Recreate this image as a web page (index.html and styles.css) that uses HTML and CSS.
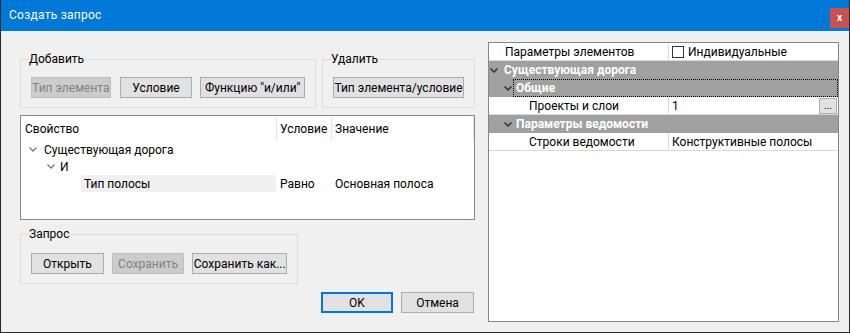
FILE: index.html
```html
<!DOCTYPE html>
<html lang="ru">
<head>
<meta charset="utf-8">
<title>Создать запрос</title>
<link rel="stylesheet" href="styles.css">
</head>
<body>
<div class="window">
  <div class="titlebar">
    <span class="title">Создать запрос</span>
    <div class="close">x</div>
  </div>
  <div class="content">
    <div class="left">
      <div class="top-groups">
        <fieldset class="group g-add">
          <legend>Добавить</legend>
          <div class="btns">
            <button class="btn disabled w-type">Тип элемента</button>
            <button class="btn w-cond">Условие</button>
            <button class="btn w-func">Функцию "и/или"</button>
          </div>
        </fieldset>
        <fieldset class="group g-del">
          <legend>Удалить</legend>
          <div class="btns">
            <button class="btn w-del">Тип элемента/условие</button>
          </div>
        </fieldset>
      </div>

      <div class="tree">
        <div class="trow thead">
          <div class="cell c1">Свойство</div>
          <div class="cell c2">Условие</div>
          <div class="cell c3">Значение</div>
        </div>
        <div class="trow">
          <div class="cell c1 lvl1">
            <svg class="tchev" width="8" height="5" viewBox="0 0 8 5"><polyline points="0.5,0.5 4,4 7.5,0.5" fill="none" stroke="#7a7a7a" stroke-width="1.3"/></svg>
            <span>Существующая дорога</span>
          </div>
          <div class="cell c2"></div>
          <div class="cell c3"></div>
        </div>
        <div class="trow">
          <div class="cell c1 lvl2">
            <svg class="tchev" width="8" height="5" viewBox="0 0 8 5"><polyline points="0.5,0.5 4,4 7.5,0.5" fill="none" stroke="#7a7a7a" stroke-width="1.3"/></svg>
            <span>И</span>
          </div>
          <div class="cell c2"></div>
          <div class="cell c3"></div>
        </div>
        <div class="trow">
          <div class="cell c1 lvl3"><span class="hl">Тип полосы</span></div>
          <div class="cell c2">Равно</div>
          <div class="cell c3">Основная полоса</div>
        </div>
      </div>

      <fieldset class="group g-query">
        <legend>Запрос</legend>
        <div class="btns">
          <button class="btn w-open">Открыть</button>
          <button class="btn disabled w-save">Сохранить</button>
          <button class="btn w-saveas">Сохранить как...</button>
        </div>
      </fieldset>

      <div class="dlg-buttons">
        <button class="btn default w-ok">OK</button>
        <button class="btn w-cancel">Отмена</button>
      </div>
    </div>

    <div class="pgrid">
      <div class="prow">
        <div class="pname">Параметры элементов</div>
        <div class="pval">
          <span class="checkbox"></span>
          <span>Индивидуальные</span>
        </div>
      </div>
      <div class="band b1">
        <svg class="bchev" width="8" height="5" viewBox="0 0 8 5"><polyline points="0.5,0.5 4,4 7.5,0.5" fill="none" stroke="#333" stroke-width="1.5"/></svg>
        <span class="blabel">Существующая дорога</span>
      </div>
      <div class="band b2">
        <svg class="bchev" width="8" height="5" viewBox="0 0 8 5"><polyline points="0.5,0.5 4,4 7.5,0.5" fill="none" stroke="#333" stroke-width="1.5"/></svg>
        <span class="blabel focus">Общие</span>
      </div>
      <div class="prow">
        <div class="pname sub">Проекты и слои</div>
        <div class="pval">
          <span class="val-text">1</span>
          <span class="ellipsis">...</span>
        </div>
      </div>
      <div class="band b2">
        <svg class="bchev" width="8" height="5" viewBox="0 0 8 5"><polyline points="0.5,0.5 4,4 7.5,0.5" fill="none" stroke="#333" stroke-width="1.5"/></svg>
        <span class="blabel">Параметры ведомости</span>
      </div>
      <div class="prow">
        <div class="pname sub">Строки ведомости</div>
        <div class="pval">Конструктивные полосы</div>
      </div>
    </div>
  </div>
</div>
</body>
</html>
```
FILE: styles.css
```css
* { box-sizing: border-box; }
html, body { margin: 0; padding: 0; }
body {
  font-family: Roboto, "Noto Sans", sans-serif;
  font-size: 12px;
  color: #000;
  background: #fff;
}

.window {
  width: 850px;
  height: 333px;
  border: 1px solid #2b2b2b;
  border-top: 0;
  background: #f0f0f0;
  display: flex;
  flex-direction: column;
}

.titlebar {
  height: 31px;
  flex: none;
  background: #0078d7;
  color: #fff;
  display: flex;
  justify-content: space-between;
  align-items: center;
  padding-left: 8px;
}
.title { line-height: 16px; margin-top: -1px; letter-spacing: 0.25px; }
.close {
  align-self: flex-start;
  margin-top: 8px;
  width: 19px;
  height: 20px;
  background: #c75050;
  color: #fff;
  font-size: 10px;
  font-weight: bold;
  display: flex;
  align-items: center;
  justify-content: center;
  line-height: 1;
}

.content {
  flex: 1;
  display: flex;
  align-items: flex-start;
  gap: 13px;
  padding: 11px 10px 0 19px;
}

.left {
  width: 455px;
  margin-top: 9px;
  display: flex;
  flex-direction: column;
}

.top-groups { display: flex; gap: 6px; }

fieldset.group {
  margin: 0;
  min-width: 0;
  border: 1px solid #dcdcdc;
  padding: 10px 10px 9px 10px;
}
fieldset.group legend {
  padding: 0 1px;
  margin-left: -3px;
  line-height: 16px;
}
fieldset.g-add { width: 296px; }
fieldset.g-del { width: 153px; }
fieldset.g-query { width: 278px; margin-top: 6px; padding-top: 11px; }

.btns { display: flex; gap: 8px; }
.g-add .btns { gap: 9px; }
.g-add .w-func { margin-left: -1px; }

.btn {
  height: 21px;
  padding: 0;
  margin: 0;
  border: 1px solid #adadad;
  background: #e1e1e1;
  color: #000;
  font: inherit;
  display: flex;
  align-items: center;
  justify-content: center;
  white-space: nowrap;
}
.btn.disabled {
  background: #cccccc;
  border-color: #bfbfbf;
  color: #838383;
}
.btn.default { border: 2px solid #0078d7; }

.w-type { width: 80px; }
.w-cond { width: 73px; }
.w-func { width: 105px; }
.w-del { width: 131px; }
.w-open { width: 73px; }
.w-save { width: 73px; }
.w-saveas { width: 95px; }
.w-ok { width: 72px; }
.w-cancel { width: 73px; }

.tree {
  margin-top: 7px;
  height: 105px;
  border: 1px solid #828790;
  background: #fff;
}
.trow {
  display: grid;
  grid-template-columns: 255px 55px 142px 1px;
  height: 17px;
}
.trow.thead { height: 25px; }
.trow.thead::after { content: ""; background: #e5e5e5; }
.cell {
  display: flex;
  align-items: center;
  white-space: nowrap;
  overflow: hidden;
}
.c1 { padding-left: 4px; }
.c2, .c3 { padding-left: 4px; }
.thead .c2, .thead .c3 { border-left: 1px solid #e5e5e5; padding-left: 3px; }

.lvl1 { padding-left: 8px; }
.lvl2 { padding-left: 26px; }
.tchev { flex: none; margin-right: 7px; }
.lvl2 .tchev { margin-right: 5px; }
.lvl3 { padding-left: 60px; align-items: stretch; }
.hl {
  flex: 1;
  background: #f0f0f0;
  padding-left: 3px;
  display: flex;
  align-items: center;
}

.dlg-buttons {
  display: flex;
  justify-content: flex-end;
  gap: 8px;
  margin-top: 8px;
  padding-right: 1px;
}

.pgrid {
  width: 351px;
  height: 280px;
  border: 1px solid #828790;
  background: #fff;
}
.prow {
  display: grid;
  grid-template-columns: 179px 1fr;
  height: 18px;
  border-bottom: 1px solid #d9d9d9;
}
.pname {
  padding-left: 16px;
  display: flex;
  align-items: center;
  white-space: nowrap;
}
.pname.sub { padding-left: 40px; }
.pval {
  border-left: 1px solid #d9d9d9;
  padding-left: 3px;
  display: flex;
  align-items: center;
  white-space: nowrap;
}
.checkbox {
  width: 12px;
  height: 12px;
  border: 1px solid #333;
  background: #fff;
  margin-right: 4px;
}
.val-text { flex: 1; }
.ellipsis {
  width: 18px;
  height: 16px;
  margin-right: 1px;
  border: 1px solid #adadad;
  background: #e1e1e1;
  font-size: 10px;
  line-height: 1;
  display: flex;
  align-items: flex-end;
  justify-content: center;
  padding-bottom: 2px;
}

.band {
  height: 18px;
  background: #a0a0a0;
  color: #fff;
  font-weight: bold;
  display: flex;
  align-items: stretch;
  white-space: nowrap;
}
.bchev { flex: none; align-self: center; }
.b1 { padding-left: 1px; }
.b1 .bchev { margin-right: 5px; }
.b2 { padding-left: 15px; }
.blabel { display: flex; align-items: center; flex: 1; padding-left: 1px; }
.b2 .blabel { padding-left: 3px; margin-left: 1px; }
.blabel.focus { outline: 1px dotted #000; outline-offset: -1px; }
```
